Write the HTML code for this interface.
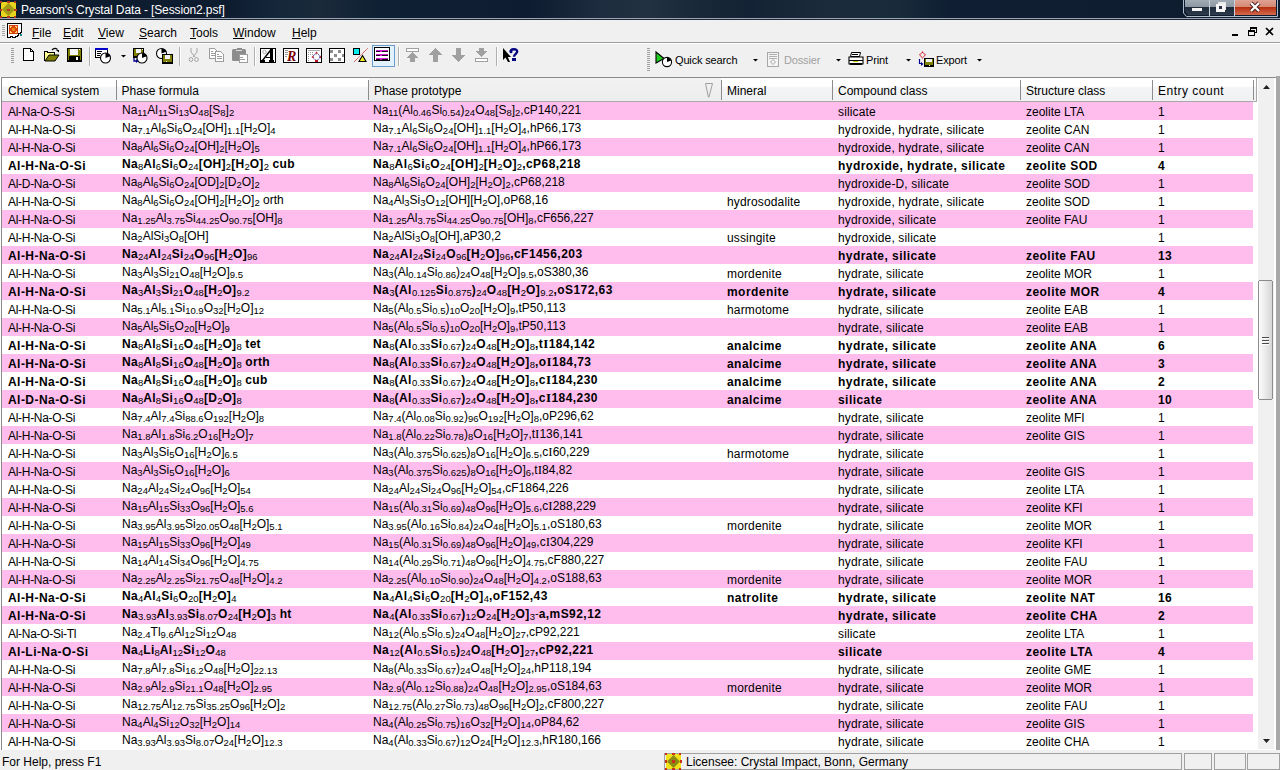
<!DOCTYPE html>
<html><head><meta charset="utf-8">
<style>
*{margin:0;padding:0;box-sizing:border-box}
html,body{width:1280px;height:770px;overflow:hidden;background:#f0f0f0;font-family:"Liberation Sans",sans-serif;font-size:12px;color:#000}
.abs{position:absolute}
#title{position:absolute;left:0;top:0;width:1280px;height:18px;background:linear-gradient(90deg,#0f1d30 0px,#0e1c30 230px,#15263a 275px,#1a2a3b 320px,#102034 380px,#0e1c31 530px,#1d2c3e 600px,#223142 650px,#182839 700px,#132335 750px,#1b2b3c 830px,#192a3b 900px,#0f1e32 950px,#0e1c2f 1280px)}
#title .t{position:absolute;left:21px;top:3px;color:#fff;font-size:12px;line-height:14px;white-space:nowrap;letter-spacing:-0.12px}
#tline1{position:absolute;left:0;top:18px;width:1280px;height:1px;background:#9aa5b1}
#tline2{position:absolute;left:0;top:19px;width:1280px;height:1px;background:#1b2636}
#menu{position:absolute;left:0;top:20px;width:1280px;height:22px;background:#f0f0f0}
#menu .m{position:absolute;top:6px;line-height:14px;font-size:12px;white-space:nowrap}
#menu .m u{text-decoration:underline;text-underline-offset:1px}
#mline{position:absolute;left:0;top:42px;width:1280px;height:1px;background:#a0a0a0}
#tb{position:absolute;left:0;top:43px;width:1280px;height:34px;background:#f0f0f0;border-top:1px solid #fff}
.tbt{position:absolute;top:53px;line-height:14px;font-size:11px;letter-spacing:-0.15px;white-space:nowrap}
#grid{position:absolute;left:0;top:77px;width:1280px;height:673px;background:#fff}
#gborder{position:absolute;left:1px;top:77px;width:1275px;height:673px;border:1px solid #8a8a8a;border-right:none;border-bottom:none}
#hdr{position:absolute;left:2px;top:78px;width:1255px;height:24px;border-right:1px solid #a8a8a8;background:linear-gradient(#ffffff 0%,#ffffff 36%,#f4f5f7 40%,#eff1f3 100%);border-bottom:1px solid #a8a8a8}
#hdr .h{position:absolute;top:4px;line-height:18px;white-space:nowrap}
#hdr .sep{position:absolute;top:2px;width:1px;height:20px;background:#8c8c8c}
.row{position:absolute;left:2px;width:1251px;height:18px;background:#fff}
.row.pink{background:#ffbdee}
.c{position:absolute;top:1px;line-height:18px;white-space:nowrap}
.c.f{top:-1px}
.c.ch{letter-spacing:-0.3px}
.c.lw{letter-spacing:0.15px}
.b .c{font-weight:bold;letter-spacing:0.45px}
.b .c.f1{letter-spacing:0.3px}
sub{font-size:9.5px;vertical-align:-2px;line-height:0;font-weight:normal;letter-spacing:0}
.si{font-family:"Liberation Serif",serif;font-size:13px}
.sup{font-size:11px;vertical-align:1px;line-height:0;font-weight:normal;letter-spacing:0}
#vscroll{position:absolute;left:1258px;top:78px;width:16px;height:671px;background:#f0f0f0}
#rframe{position:absolute;left:1276px;top:76px;width:4px;height:675px;background:#a8a8a8}
#status{position:absolute;left:0;top:750px;width:1280px;height:20px;background:#f0f0f0}
#status .s{position:absolute;top:4px;line-height:16px;white-space:nowrap}
.panel{position:absolute;top:3px;height:17px;border:1px solid #a0a0a0}
</style></head><body>
<div id="title"><div class="t">Pearson's Crystal Data - [Session2.psf]</div></div>
<div id="tline1"></div><div id="tline2"></div>
<div id="menu">
  <div class="m" style="left:32px"><u>F</u>ile</div>
  <div class="m" style="left:63px"><u>E</u>dit</div>
  <div class="m" style="left:98px"><u>V</u>iew</div>
  <div class="m" style="left:139px"><u>S</u>earch</div>
  <div class="m" style="left:190px"><u>T</u>ools</div>
  <div class="m" style="left:233px"><u>W</u>indow</div>
  <div class="m" style="left:292px"><u>H</u>elp</div>
</div>
<div id="mline"></div>
<div id="tb"></div>
<svg class="abs" style="left:0;top:0" width="1280" height="80" viewBox="0 0 1280 80" shape-rendering="crispEdges">
<!-- title icon -->
<rect x="1" y="2" width="15" height="15" fill="#e6d41e"/>
<path d="M8.5 3 L15 9.5 L8.5 16 L2 9.5Z" fill="#a09a18" shape-rendering="geometricPrecision"/>
<g fill="#b8381c"><rect x="0" y="1" width="2" height="2"/><rect x="7" y="1" width="3" height="2"/><rect x="14" y="1" width="2" height="2"/><rect x="0" y="9" width="2" height="2"/><rect x="14" y="9" width="3" height="2"/><rect x="0" y="16" width="2" height="2"/><rect x="7" y="16" width="3" height="2"/><rect x="14" y="16" width="2" height="2"/><rect x="7" y="9" width="3" height="2"/></g>
<!-- window buttons -->
<path d="M1183.5 0 V13 L1186.5 16.5 H1277.5 V0" fill="none" stroke="#aebccb" stroke-width="1" shape-rendering="geometricPrecision"/>
<defs>
<linearGradient id="gbtn" x1="0" y1="0" x2="0" y2="1"><stop offset="0" stop-color="#a0abb5"/><stop offset="0.45" stop-color="#8e98a2"/><stop offset="0.5" stop-color="#1e2b3b"/><stop offset="1" stop-color="#2c3a4c"/></linearGradient>
<linearGradient id="rbtn" x1="0" y1="0" x2="0" y2="1"><stop offset="0" stop-color="#dfa293"/><stop offset="0.45" stop-color="#d58876"/><stop offset="0.5" stop-color="#b9300f"/><stop offset="1" stop-color="#d26a4e"/></linearGradient>
<linearGradient id="thumb" x1="0" y1="0" x2="1" y2="0"><stop offset="0" stop-color="#fbfbfb"/><stop offset="0.5" stop-color="#e9e9e9"/><stop offset="1" stop-color="#d6d6d6"/></linearGradient>
</defs>
<path d="M1185 0 H1209 V15 H1188 L1185 12Z" fill="url(#gbtn)"/>
<rect x="1210" y="0" width="24" height="15" fill="url(#gbtn)"/>
<rect x="1235" y="0" width="41" height="15" fill="url(#rbtn)"/>
<g fill="none" stroke="#c6d0da" stroke-width="1"><path d="M1209.5 0 V15.5 M1234.5 0 V15.5"/></g>
<rect x="1192" y="8" width="10" height="3" fill="#f4f4f4"/>
<rect x="1218" y="2" width="8" height="8" fill="#e8e8e8" stroke="#1a2230" stroke-width="0"/>
<rect x="1216" y="4" width="9" height="8" fill="#f4f4f4"/>
<rect x="1219" y="6" width="3" height="3" fill="#2a3444"/>
<path d="M1251 3 L1259 11 M1259 3 L1251 11" stroke="#4a2020" stroke-width="4" shape-rendering="geometricPrecision"/>
<path d="M1251 3 L1259 11 M1259 3 L1251 11" stroke="#ffffff" stroke-width="2.2" shape-rendering="geometricPrecision"/>
<!-- menu grip & mdi icon -->
<g fill="#a8a8a8"><rect x="2" y="25" width="3" height="1"/><rect x="2" y="27" width="3" height="1"/><rect x="2" y="29" width="3" height="1"/><rect x="2" y="31" width="3" height="1"/><rect x="2" y="33" width="3" height="1"/><rect x="2" y="35" width="3" height="1"/></g>
<path d="M7.5 23.5 H21.5 V32.5 H20.5 V33.5 H18.5 V35.5 H17.5 V36.5 H15.5 V37.5 H12.5 V36.5 H10.5 V37.5 H7.5Z" fill="#fff" stroke="#000" stroke-width="1"/>
<rect x="9" y="25" width="9" height="9" fill="#d8400e"/>
<g fill="#ffd86a"><rect x="10" y="26" width="2" height="1"/><rect x="10" y="26" width="1" height="2"/><rect x="15" y="26" width="2" height="1"/><rect x="16" y="26" width="1" height="2"/><rect x="10" y="32" width="2" height="1"/><rect x="10" y="31" width="1" height="2"/><rect x="15" y="32" width="2" height="1"/><rect x="16" y="31" width="1" height="2"/></g>
<rect x="12" y="28" width="3" height="3" fill="#e88a10"/>
<rect x="20" y="34" width="2" height="2" fill="#1a8a8a"/>
<!-- mdi buttons -->
<rect x="1232" y="34" width="6" height="2" fill="#000"/>
<path d="M1250.5 27.5 H1256.5 V32.5 H1254.5 M1250.5 27.5 V29.5" fill="none" stroke="#000" stroke-width="1"/>
<rect x="1250" y="27" width="7" height="2" fill="#000"/>
<path d="M1248.5 30.5 H1254.5 V35.5 H1248.5Z" fill="none" stroke="#000" stroke-width="1"/>
<rect x="1248" y="30" width="7" height="2" fill="#000"/>
<path d="M1266 28 L1273 35 M1273 28 L1266 35" stroke="#000" stroke-width="1.6" shape-rendering="geometricPrecision"/>
<!-- toolbar 1 grip -->
<g fill="#a0a0a0"><rect x="11" y="48" width="3" height="1"/><rect x="11" y="50" width="3" height="1"/><rect x="11" y="52" width="3" height="1"/><rect x="11" y="54" width="3" height="1"/><rect x="11" y="56" width="3" height="1"/><rect x="11" y="58" width="3" height="1"/><rect x="11" y="60" width="3" height="1"/><rect x="11" y="62" width="3" height="1"/></g>
<!-- new -->
<path d="M23.5 48.5 H30.5 L33.5 51.5 V60.5 H23.5Z" fill="#fff" stroke="#000"/>
<path d="M30.5 48.5 V51.5 H33.5" fill="none" stroke="#000"/>
<!-- open -->
<path d="M44.5 60.5 V51.5 H47.5 V52.5 H54.5 V55.5" fill="#ffff90" stroke="#000"/>
<rect x="45" y="52" width="9" height="8" fill="#ffff90"/>
<path d="M44.5 60.5 V51.5 H47.5 V52.5 H54.5 V55" fill="none" stroke="#000"/>
<path d="M45 61 L49 55 H59 L55 61Z" fill="#808000" stroke="#000" stroke-width="1" shape-rendering="geometricPrecision"/>
<path d="M52 50 Q54.5 47 57.5 49.5" fill="none" stroke="#000" stroke-width="1.2" shape-rendering="geometricPrecision"/>
<path d="M56 50 H59 V52.5Z" fill="#000" shape-rendering="geometricPrecision"/>
<!-- save -->
<rect x="67" y="48" width="15" height="14" fill="#000"/>
<rect x="68" y="49" width="13" height="11" fill="#808000"/>
<rect x="70" y="49" width="8" height="6" fill="#f4f4f4"/>
<rect x="69" y="56" width="11" height="5" fill="#000"/>
<rect x="76" y="57" width="2" height="3" fill="#fff"/>
<rect x="79" y="49" width="1" height="1" fill="#fff"/>
<!-- sep -->
<rect x="89" y="47" width="1" height="19" fill="#b0b0b0"/><rect x="90" y="47" width="1" height="19" fill="#fff"/>
<!-- search form -->
<rect x="95.5" y="48.5" width="12" height="9" fill="#fff" stroke="#000"/>
<rect x="95" y="48" width="13" height="2" fill="#0000c8"/>
<g fill="#000"><rect x="97" y="51" width="5" height="1"/><rect x="97" y="53" width="4" height="1"/><rect x="97" y="55" width="3" height="1"/></g>
<circle cx="105.5" cy="58" r="5" fill="#fff" stroke="#000" stroke-width="1.1" shape-rendering="geometricPrecision"/>
<path d="M105.5 58 V53 A5 5 0 0 1 110.2 56.3Z" fill="#000" shape-rendering="geometricPrecision"/>
<!-- dropdown -->
<path d="M121 55 H126 L123.5 57.5Z" fill="#000" shape-rendering="geometricPrecision"/>
<!-- icon floppy+clock -->
<rect x="133" y="48" width="11" height="10" fill="#000"/>
<rect x="134" y="49" width="9" height="7" fill="#808000"/>
<rect x="136" y="49" width="5" height="4" fill="#f4f4f4"/>
<rect x="142" y="49" width="1" height="1" fill="#fff"/>
<circle cx="142" cy="58" r="5" fill="#fff" stroke="#000" stroke-width="1.1" shape-rendering="geometricPrecision"/>
<path d="M142 58 V53 A5 5 0 0 1 146.7 56.3Z" fill="#000" shape-rendering="geometricPrecision"/>
<path d="M134 58 V61 H137" fill="none" stroke="#00008a" stroke-width="1.3" shape-rendering="geometricPrecision"/>
<path d="M136 59 L138.5 61 L136 63Z" fill="#00008a" shape-rendering="geometricPrecision"/>
<!-- icon clock+floppy -->
<circle cx="161.5" cy="53.5" r="5" fill="#fff" stroke="#000" stroke-width="1.1" shape-rendering="geometricPrecision"/>
<path d="M161.5 53.5 V48.5 A5 5 0 0 1 166.2 51.8Z" fill="#000" shape-rendering="geometricPrecision"/>
<rect x="162" y="54" width="11" height="10" fill="#000"/>
<rect x="163" y="55" width="9" height="7" fill="#808000"/>
<rect x="165" y="55" width="5" height="4" fill="#f4f4f4"/>
<rect x="166" y="61" width="1" height="1" fill="#fff"/>
<!-- sep -->
<rect x="179" y="47" width="1" height="19" fill="#b0b0b0"/><rect x="180" y="47" width="1" height="19" fill="#fff"/>
<!-- cut gray -->
<g fill="none" stroke="#a4a4a4" stroke-width="1" shape-rendering="geometricPrecision">
<path d="M191 48 V52 L195 57 M197 48 V52 L193 57"/>
<ellipse cx="191" cy="59.5" rx="1.8" ry="2"/><ellipse cx="196.5" cy="59.5" rx="1.8" ry="2"/>
</g>
<!-- copy gray -->
<path d="M209.5 48.5 H214.5 L216.5 50.5 V58.5 H209.5Z" fill="#fff" stroke="#9c9c9c"/>
<g fill="#9c9c9c"><rect x="211" y="51" width="2" height="1"/><rect x="211" y="53" width="4" height="1"/><rect x="211" y="55" width="4" height="1"/></g>
<path d="M215.5 51.5 H220.5 L223.5 54.5 V61.5 H215.5Z" fill="#fff" stroke="#9c9c9c"/>
<g fill="#9c9c9c"><rect x="217" y="54" width="2" height="1"/><rect x="217" y="56" width="5" height="1"/><rect x="217" y="58" width="5" height="1"/></g>
<!-- paste gray -->
<rect x="232" y="49" width="14" height="12" rx="1.5" fill="#8c8c8c" shape-rendering="geometricPrecision"/>
<rect x="237" y="48" width="5" height="2" fill="#8c8c8c"/>
<rect x="236" y="50" width="6" height="1" fill="#e0e0e0"/>
<rect x="239" y="54" width="8" height="8" fill="#fff" stroke="#9c9c9c" stroke-width="1"/>
<g fill="#9c9c9c"><rect x="240" y="57" width="3" height="1"/><rect x="240" y="59" width="5" height="1"/></g>
<!-- sep -->
<rect x="254" y="47" width="1" height="19" fill="#b0b0b0"/><rect x="255" y="47" width="1" height="19" fill="#fff"/>
<!-- A icon -->
<rect x="260.5" y="48.5" width="15" height="14" fill="#fff" stroke="#000" stroke-width="1"/>
<circle cx="264.5" cy="52" r="1.7" fill="none" stroke="#a8a8a8" stroke-width="1" shape-rendering="geometricPrecision"/>
<path d="M262.5 60.5 L271.5 49" stroke="#000" stroke-width="1.5" shape-rendering="geometricPrecision"/>
<g fill="#000"><rect x="270" y="49" width="3" height="11"/><rect x="266" y="57" width="5" height="1"/><rect x="261" y="60" width="4" height="2"/><rect x="269" y="60" width="5" height="2"/></g>
<!-- R icon -->
<rect x="283.5" y="48.5" width="15" height="14" fill="#fff" stroke="#000" stroke-width="1"/>
<g fill="#9a9a9a"><rect x="285" y="50" width="3" height="1"/><rect x="285" y="52" width="3" height="1"/><rect x="285" y="54" width="3" height="1"/><rect x="285" y="56" width="2" height="1"/></g>
<text x="287" y="61" font-family="Liberation Serif" font-style="italic" font-weight="bold" font-size="14" fill="#7a0000">R</text>
<!-- diagram icon -->
<rect x="306.5" y="48.5" width="15" height="14" fill="#fff" stroke="#000" stroke-width="1"/>
<rect x="308" y="50" width="12" height="1" fill="#b0b0b0"/>
<g fill="#9a9a9a"><rect x="308" y="52" width="1" height="1"/><rect x="310" y="52" width="1" height="1"/><rect x="312" y="52" width="1" height="1"/><rect x="308" y="54" width="1" height="1"/><rect x="310" y="54" width="1" height="1"/><rect x="312" y="54" width="1" height="1"/><rect x="308" y="56" width="1" height="1"/><rect x="308" y="58" width="1" height="1"/><rect x="308" y="60" width="1" height="1"/></g>
<circle cx="316.5" cy="57" r="3.2" fill="#fff" stroke="#1010a0" stroke-width="1" stroke-dasharray="1 0.8" shape-rendering="geometricPrecision"/>
<g fill="#c01020" shape-rendering="geometricPrecision"><path d="M316.5 51.5 L318 53.5 H315Z"/><path d="M311.5 57 L313.5 55.5 V58.5Z"/><path d="M321 55.5 V58.5 L319.5 57Z"/><rect x="315" y="60" width="3" height="2"/></g>
<!-- checker icon -->
<rect x="329.5" y="48.5" width="15" height="14" fill="#fff" stroke="#000" stroke-width="1"/>
<g fill="#8c8c8c"><rect x="330" y="50" width="3" height="3"/><rect x="338" y="50" width="3" height="3"/><rect x="334" y="54" width="3" height="3"/><rect x="342" y="54" width="2" height="3"/><rect x="330" y="58" width="3" height="3"/><rect x="338" y="58" width="3" height="3"/></g>
<!-- cyan/triangle -->
<rect x="353.5" y="48.5" width="6" height="6" fill="#00f0f0" stroke="#000" stroke-width="1"/>
<path d="M354 62 L368 48" stroke="#d02020" stroke-width="1" stroke-dasharray="1 0.6" shape-rendering="geometricPrecision"/>
<path d="M362.5 55.5 L366 61.5 H359Z" fill="#f8f020" stroke="#000" stroke-width="1.1" shape-rendering="geometricPrecision"/>
<!-- selected button -->
<rect x="372.5" y="45.5" width="22" height="21" fill="#e2f2fc" stroke="#6c9ccc"/>
<rect x="374.5" y="47.5" width="15" height="13" fill="#fff" stroke="#000" stroke-width="1"/>
<g fill="#d020d0"><rect x="376" y="50" width="12" height="2"/><rect x="376" y="54" width="12" height="2"/><rect x="376" y="58" width="12" height="2"/></g>
<g fill="#200020"><rect x="376" y="50.5" width="4" height="1.2"/><rect x="382" y="50.5" width="6" height="1.2"/><rect x="376" y="54.5" width="4" height="1.2"/><rect x="382" y="54.5" width="6" height="1.2"/><rect x="376" y="58.5" width="4" height="1.2"/><rect x="382" y="58.5" width="6" height="1.2"/></g>
<!-- sep -->
<rect x="398" y="47" width="1" height="19" fill="#b0b0b0"/><rect x="399" y="47" width="1" height="19" fill="#fff"/>
<!-- arrows gray -->
<g fill="#a0a0a0">
<rect x="406.5" y="48.5" width="12" height="3" fill="#fff" stroke="#a0a0a0" stroke-width="1.2"/>
<path d="M412.5 52 L419 58 H415 V62 H410 V58 H406Z"/>
<path d="M435.5 48 L442 55 H438 V62 H433 V55 H429Z"/>
<path d="M456 48 H461 V55 H465 L458.5 62 L452 55 H456Z"/>
<path d="M479 48 H484 V51 H488 L481.5 57 L475 51 H479Z"/>
<rect x="475.5" y="58.5" width="12" height="3" fill="#fff" stroke="#a0a0a0" stroke-width="1.2"/>
</g>
<!-- sep -->
<rect x="496" y="47" width="1" height="19" fill="#b0b0b0"/><rect x="497" y="47" width="1" height="19" fill="#fff"/>
<!-- help cursor -->
<path d="M503 48 V60 L505.5 57.5 L508 62 H510 L507.8 57 H511Z" fill="#000" shape-rendering="geometricPrecision"/>
<path d="M510.6 51.8 C510.6 48.6, 517.2 48.4, 517.2 51.6 C517.2 53.8, 514 54, 514 56.8" fill="none" stroke="#000080" stroke-width="2.4" shape-rendering="geometricPrecision"/><circle cx="511" cy="51.8" r="1.5" fill="#000080" shape-rendering="geometricPrecision"/><rect x="512" y="58" width="4" height="2.5" fill="#000080"/>
<!-- toolbar 2 grip -->
<g fill="#a0a0a0"><rect x="647" y="48" width="3" height="1"/><rect x="647" y="50" width="3" height="1"/><rect x="647" y="52" width="3" height="1"/><rect x="647" y="54" width="3" height="1"/><rect x="647" y="56" width="3" height="1"/><rect x="647" y="58" width="3" height="1"/><rect x="647" y="60" width="3" height="1"/><rect x="647" y="62" width="3" height="1"/><rect x="647" y="64" width="3" height="1"/><rect x="647" y="66" width="3" height="1"/><rect x="647" y="68" width="3" height="1"/><rect x="647" y="70" width="3" height="1"/></g>
<!-- quick search icon -->
<path d="M656 52 L664 58.5 L656 63Z" fill="#20d020" stroke="#000" stroke-width="1.1" shape-rendering="geometricPrecision"/>
<circle cx="667" cy="62" r="4.6" fill="#fff" stroke="#000" stroke-width="1.1" shape-rendering="geometricPrecision"/>
<path d="M667 62 V57.4 A4.6 4.6 0 0 1 671.3 60.4Z" fill="#000" shape-rendering="geometricPrecision"/>
<path d="M753 59 H758 L755.5 61.5Z" fill="#000" shape-rendering="geometricPrecision"/>
<!-- dossier icon gray -->
<rect x="767.5" y="52.5" width="11" height="14" fill="#f4f4f4" stroke="#a8a8a8"/>
<g fill="#b0b0b0"><rect x="769" y="54" width="8" height="1"/><rect x="769" y="56" width="8" height="1"/><rect x="769" y="58" width="8" height="1"/></g>
<path d="M773 59.5 L775.5 62 L773 64.5 L770.5 62Z" fill="none" stroke="#a8a8a8" shape-rendering="geometricPrecision"/>
<path d="M836 59 H841 L838.5 61.5Z" fill="#000" shape-rendering="geometricPrecision"/>
<!-- print icon -->
<path d="M851.5 52.5 H860.5 L859.5 56.5 H850.5Z" fill="#fff" stroke="#000" shape-rendering="geometricPrecision"/>
<rect x="852" y="54" width="6" height="1" fill="#000"/>
<path d="M849 57 H863 V64 H849Z" fill="#fff" stroke="#000" stroke-width="1.1" shape-rendering="geometricPrecision"/>
<rect x="849" y="60" width="14" height="1" fill="#000"/>
<rect x="853" y="61" width="5" height="1" fill="#c8c800"/>
<rect x="850" y="63" width="12" height="2" fill="#000"/>
<path d="M906 59 H911 L908.5 61.5Z" fill="#000" shape-rendering="geometricPrecision"/>
<!-- export icon -->
<path d="M922.5 52 L925.5 55 L922.5 58 L919.5 55Z" fill="none" stroke="#d01020" stroke-width="1.1" stroke-dasharray="1 0.6" shape-rendering="geometricPrecision"/>
<rect x="924" y="58" width="10" height="9" fill="#000"/>
<rect x="925" y="59" width="8" height="6" fill="#808000"/>
<rect x="926" y="59" width="6" height="3" fill="#f4f4f4"/>
<rect x="929" y="65" width="1" height="1" fill="#fff"/>
<path d="M919.5 59 V63.5 H922" fill="none" stroke="#000090" stroke-width="1.2" shape-rendering="geometricPrecision"/>
<path d="M921 62 L923.5 64 L921 66Z" fill="#000090" shape-rendering="geometricPrecision"/>
<path d="M977 59 H982 L979.5 61.5Z" fill="#000" shape-rendering="geometricPrecision"/>
</svg>

<div class="tbt" style="left:675px">Quick search</div>
<div class="tbt" style="left:784px;color:#a0a0a0">Dossier</div>
<div class="tbt" style="left:866px">Print</div>
<div class="tbt" style="left:936px">Export</div>
<div id="grid"></div>
<div id="gborder"></div>
<div id="hdr">
  <div style="position:absolute;left:367px;top:0;width:352px;height:23px;background:linear-gradient(#f2f2f2,#ededed)"></div>
  <svg style="position:absolute;left:700px;top:2px" width="16" height="20" viewBox="0 0 16 20"><path d="M3.5 3.5 H10.5 M3.5 3.5 L6.5 17.5 M10.5 3.5 L7 17" fill="none" stroke="#a0a0a0" stroke-width="1"/></svg>
  <div class="h" style="left:6px">Chemical system</div>
  <div class="sep" style="left:114px"></div>
  <div class="h" style="left:119.5px">Phase formula</div>
  <div class="sep" style="left:366px"></div>
  <div class="h" style="left:372px">Phase prototype</div>
  <div class="sep" style="left:719px"></div>
  <div class="h" style="left:725px">Mineral</div>
  <div class="sep" style="left:830px"></div>
  <div class="h" style="left:836px">Compound class</div>
  <div class="sep" style="left:1018px"></div>
  <div class="h" style="left:1024px">Structure class</div>
  <div class="sep" style="left:1150px"></div>
  <div class="h" style="left:1156px;letter-spacing:0.5px">Entry count</div>
  <div class="sep" style="left:1251px"></div>
</div>
<div class="row pink" style="top:102px"><div class="c ch" style="left:6px">Al-Na-O-S-Si</div><div class="c f f1" style="left:120px">Na<sub>11</sub>Al<sub>11</sub>Si<sub>13</sub>O<sub>48</sub>[S<sub>8</sub>]<sub>2</sub></div><div class="c f" style="left:371px">Na<sub>11</sub>(Al<sub>0.46</sub>Si<sub>0.54</sub>)<sub>24</sub>O<sub>48</sub>[S<sub>8</sub>]<sub>2</sub>,cP140,221</div><div class="c lw" style="left:725px"></div><div class="c lw" style="left:836px">silicate</div><div class="c " style="left:1024px">zeolite LTA</div><div class="c " style="left:1156px">1</div></div>
<div class="row" style="top:120px"><div class="c ch" style="left:6px">Al-H-Na-O-Si</div><div class="c f f1" style="left:120px">Na<sub>7.1</sub>Al<sub>6</sub>Si<sub>6</sub>O<sub>24</sub>[OH]<sub>1.1</sub>[H<sub>2</sub>O]<sub>4</sub></div><div class="c f" style="left:371px">Na<sub>7.1</sub>Al<sub>6</sub>Si<sub>6</sub>O<sub>24</sub>[OH]<sub>1.1</sub>[H<sub>2</sub>O]<sub>4</sub>,hP66,173</div><div class="c lw" style="left:725px"></div><div class="c lw" style="left:836px">hydroxide, hydrate, silicate</div><div class="c " style="left:1024px">zeolite CAN</div><div class="c " style="left:1156px">1</div></div>
<div class="row pink" style="top:138px"><div class="c ch" style="left:6px">Al-H-Na-O-Si</div><div class="c f f1" style="left:120px">Na<sub>8</sub>Al<sub>6</sub>Si<sub>6</sub>O<sub>24</sub>[OH]<sub>2</sub>[H<sub>2</sub>O]<sub>5</sub></div><div class="c f" style="left:371px">Na<sub>7.1</sub>Al<sub>6</sub>Si<sub>6</sub>O<sub>24</sub>[OH]<sub>1.1</sub>[H<sub>2</sub>O]<sub>4</sub>,hP66,173</div><div class="c lw" style="left:725px"></div><div class="c lw" style="left:836px">hydroxide, hydrate, silicate</div><div class="c " style="left:1024px">zeolite CAN</div><div class="c " style="left:1156px">1</div></div>
<div class="row b" style="top:156px"><div class="c ch" style="left:6px">Al-H-Na-O-Si</div><div class="c f f1" style="left:120px">Na<sub>8</sub>Al<sub>6</sub>Si<sub>6</sub>O<sub>24</sub>[OH]<sub>2</sub>[H<sub>2</sub>O]<sub>2</sub> cub</div><div class="c f" style="left:371px">Na<sub>8</sub>Al<sub>6</sub>Si<sub>6</sub>O<sub>24</sub>[OH]<sub>2</sub>[H<sub>2</sub>O]<sub>2</sub>,cP68,218</div><div class="c lw" style="left:725px"></div><div class="c lw" style="left:836px">hydroxide, hydrate, silicate</div><div class="c " style="left:1024px">zeolite SOD</div><div class="c " style="left:1156px">4</div></div>
<div class="row pink" style="top:174px"><div class="c ch" style="left:6px">Al-D-Na-O-Si</div><div class="c f f1" style="left:120px">Na<sub>8</sub>Al<sub>6</sub>Si<sub>6</sub>O<sub>24</sub>[OD]<sub>2</sub>[D<sub>2</sub>O]<sub>2</sub></div><div class="c f" style="left:371px">Na<sub>8</sub>Al<sub>6</sub>Si<sub>6</sub>O<sub>24</sub>[OH]<sub>2</sub>[H<sub>2</sub>O]<sub>2</sub>,cP68,218</div><div class="c lw" style="left:725px"></div><div class="c lw" style="left:836px">hydroxide-D, silicate</div><div class="c " style="left:1024px">zeolite SOD</div><div class="c " style="left:1156px">1</div></div>
<div class="row" style="top:192px"><div class="c ch" style="left:6px">Al-H-Na-O-Si</div><div class="c f f1" style="left:120px">Na<sub>8</sub>Al<sub>6</sub>Si<sub>6</sub>O<sub>24</sub>[OH]<sub>2</sub>[H<sub>2</sub>O]<sub>2</sub> orth</div><div class="c f" style="left:371px">Na<sub>4</sub>Al<sub>3</sub>Si<sub>3</sub>O<sub>12</sub>[OH][H<sub>2</sub>O],oP68,16</div><div class="c lw" style="left:725px">hydrosodalite</div><div class="c lw" style="left:836px">hydroxide, hydrate, silicate</div><div class="c " style="left:1024px">zeolite SOD</div><div class="c " style="left:1156px">1</div></div>
<div class="row pink" style="top:210px"><div class="c ch" style="left:6px">Al-H-Na-O-Si</div><div class="c f f1" style="left:120px">Na<sub>1.25</sub>Al<sub>3.75</sub>Si<sub>44.25</sub>O<sub>90.75</sub>[OH]<sub>8</sub></div><div class="c f" style="left:371px">Na<sub>1.25</sub>Al<sub>3.75</sub>Si<sub>44.25</sub>O<sub>90.75</sub>[OH]<sub>8</sub>,cF656,227</div><div class="c lw" style="left:725px"></div><div class="c lw" style="left:836px">hydroxide, silicate</div><div class="c " style="left:1024px">zeolite FAU</div><div class="c " style="left:1156px">1</div></div>
<div class="row" style="top:228px"><div class="c ch" style="left:6px">Al-H-Na-O-Si</div><div class="c f f1" style="left:120px">Na<sub>2</sub>AlSi<sub>3</sub>O<sub>8</sub>[OH]</div><div class="c f" style="left:371px">Na<sub>2</sub>AlSi<sub>3</sub>O<sub>8</sub>[OH],aP30,2</div><div class="c lw" style="left:725px">ussingite</div><div class="c lw" style="left:836px">hydroxide, silicate</div><div class="c " style="left:1024px"></div><div class="c " style="left:1156px">1</div></div>
<div class="row pink b" style="top:246px"><div class="c ch" style="left:6px">Al-H-Na-O-Si</div><div class="c f f1" style="left:120px">Na<sub>24</sub>Al<sub>24</sub>Si<sub>24</sub>O<sub>96</sub>[H<sub>2</sub>O]<sub>96</sub></div><div class="c f" style="left:371px">Na<sub>24</sub>Al<sub>24</sub>Si<sub>24</sub>O<sub>96</sub>[H<sub>2</sub>O]<sub>96</sub>,cF1456,203</div><div class="c lw" style="left:725px"></div><div class="c lw" style="left:836px">hydrate, silicate</div><div class="c " style="left:1024px">zeolite FAU</div><div class="c " style="left:1156px">13</div></div>
<div class="row" style="top:264px"><div class="c ch" style="left:6px">Al-H-Na-O-Si</div><div class="c f f1" style="left:120px">Na<sub>3</sub>Al<sub>3</sub>Si<sub>21</sub>O<sub>48</sub>[H<sub>2</sub>O]<sub>9.5</sub></div><div class="c f" style="left:371px">Na<sub>3</sub>(Al<sub>0.14</sub>Si<sub>0.86</sub>)<sub>24</sub>O<sub>48</sub>[H<sub>2</sub>O]<sub>9.5</sub>,oS380,36</div><div class="c lw" style="left:725px">mordenite</div><div class="c lw" style="left:836px">hydrate, silicate</div><div class="c " style="left:1024px">zeolite MOR</div><div class="c " style="left:1156px">1</div></div>
<div class="row pink b" style="top:282px"><div class="c ch" style="left:6px">Al-H-Na-O-Si</div><div class="c f f1" style="left:120px">Na<sub>3</sub>Al<sub>3</sub>Si<sub>21</sub>O<sub>48</sub>[H<sub>2</sub>O]<sub>9.2</sub></div><div class="c f" style="left:371px">Na<sub>3</sub>(Al<sub>0.125</sub>Si<sub>0.875</sub>)<sub>24</sub>O<sub>48</sub>[H<sub>2</sub>O]<sub>9.2</sub>,oS172,63</div><div class="c lw" style="left:725px">mordenite</div><div class="c lw" style="left:836px">hydrate, silicate</div><div class="c " style="left:1024px">zeolite MOR</div><div class="c " style="left:1156px">4</div></div>
<div class="row" style="top:300px"><div class="c ch" style="left:6px">Al-H-Na-O-Si</div><div class="c f f1" style="left:120px">Na<sub>5.1</sub>Al<sub>5.1</sub>Si<sub>10.9</sub>O<sub>32</sub>[H<sub>2</sub>O]<sub>12</sub></div><div class="c f" style="left:371px">Na<sub>5</sub>(Al<sub>0.5</sub>Si<sub>0.5</sub>)<sub>10</sub>O<sub>20</sub>[H<sub>2</sub>O]<sub>9</sub>,tP50,113</div><div class="c lw" style="left:725px">harmotome</div><div class="c lw" style="left:836px">hydrate, silicate</div><div class="c " style="left:1024px">zeolite EAB</div><div class="c " style="left:1156px">1</div></div>
<div class="row pink" style="top:318px"><div class="c ch" style="left:6px">Al-H-Na-O-Si</div><div class="c f f1" style="left:120px">Na<sub>5</sub>Al<sub>5</sub>Si<sub>5</sub>O<sub>20</sub>[H<sub>2</sub>O]<sub>9</sub></div><div class="c f" style="left:371px">Na<sub>5</sub>(Al<sub>0.5</sub>Si<sub>0.5</sub>)<sub>10</sub>O<sub>20</sub>[H<sub>2</sub>O]<sub>9</sub>,tP50,113</div><div class="c lw" style="left:725px"></div><div class="c lw" style="left:836px">hydrate, silicate</div><div class="c " style="left:1024px">zeolite EAB</div><div class="c " style="left:1156px">1</div></div>
<div class="row b" style="top:336px"><div class="c ch" style="left:6px">Al-H-Na-O-Si</div><div class="c f f1" style="left:120px">Na<sub>8</sub>Al<sub>8</sub>Si<sub>16</sub>O<sub>48</sub>[H<sub>2</sub>O]<sub>8</sub> tet</div><div class="c f" style="left:371px">Na<sub>8</sub>(Al<sub>0.33</sub>Si<sub>0.67</sub>)<sub>24</sub>O<sub>48</sub>[H<sub>2</sub>O]<sub>8</sub>,t<span class="si">I</span>184,142</div><div class="c lw" style="left:725px">analcime</div><div class="c lw" style="left:836px">hydrate, silicate</div><div class="c " style="left:1024px">zeolite ANA</div><div class="c " style="left:1156px">6</div></div>
<div class="row pink b" style="top:354px"><div class="c ch" style="left:6px">Al-H-Na-O-Si</div><div class="c f f1" style="left:120px">Na<sub>8</sub>Al<sub>8</sub>Si<sub>16</sub>O<sub>48</sub>[H<sub>2</sub>O]<sub>8</sub> orth</div><div class="c f" style="left:371px">Na<sub>8</sub>(Al<sub>0.33</sub>Si<sub>0.67</sub>)<sub>24</sub>O<sub>48</sub>[H<sub>2</sub>O]<sub>8</sub>,o<span class="si">I</span>184,73</div><div class="c lw" style="left:725px">analcime</div><div class="c lw" style="left:836px">hydrate, silicate</div><div class="c " style="left:1024px">zeolite ANA</div><div class="c " style="left:1156px">3</div></div>
<div class="row b" style="top:372px"><div class="c ch" style="left:6px">Al-H-Na-O-Si</div><div class="c f f1" style="left:120px">Na<sub>8</sub>Al<sub>8</sub>Si<sub>16</sub>O<sub>48</sub>[H<sub>2</sub>O]<sub>8</sub> cub</div><div class="c f" style="left:371px">Na<sub>8</sub>(Al<sub>0.33</sub>Si<sub>0.67</sub>)<sub>24</sub>O<sub>48</sub>[H<sub>2</sub>O]<sub>8</sub>,c<span class="si">I</span>184,230</div><div class="c lw" style="left:725px">analcime</div><div class="c lw" style="left:836px">hydrate, silicate</div><div class="c " style="left:1024px">zeolite ANA</div><div class="c " style="left:1156px">2</div></div>
<div class="row pink b" style="top:390px"><div class="c ch" style="left:6px">Al-D-Na-O-Si</div><div class="c f f1" style="left:120px">Na<sub>8</sub>Al<sub>8</sub>Si<sub>16</sub>O<sub>48</sub>[D<sub>2</sub>O]<sub>8</sub></div><div class="c f" style="left:371px">Na<sub>8</sub>(Al<sub>0.33</sub>Si<sub>0.67</sub>)<sub>24</sub>O<sub>48</sub>[H<sub>2</sub>O]<sub>8</sub>,c<span class="si">I</span>184,230</div><div class="c lw" style="left:725px">analcime</div><div class="c lw" style="left:836px">silicate</div><div class="c " style="left:1024px">zeolite ANA</div><div class="c " style="left:1156px">10</div></div>
<div class="row" style="top:408px"><div class="c ch" style="left:6px">Al-H-Na-O-Si</div><div class="c f f1" style="left:120px">Na<sub>7.4</sub>Al<sub>7.4</sub>Si<sub>88.6</sub>O<sub>192</sub>[H<sub>2</sub>O]<sub>8</sub></div><div class="c f" style="left:371px">Na<sub>7.4</sub>(Al<sub>0.08</sub>Si<sub>0.92</sub>)<sub>96</sub>O<sub>192</sub>[H<sub>2</sub>O]<sub>8</sub>,oP296,62</div><div class="c lw" style="left:725px"></div><div class="c lw" style="left:836px">hydrate, silicate</div><div class="c " style="left:1024px">zeolite MFI</div><div class="c " style="left:1156px">1</div></div>
<div class="row pink" style="top:426px"><div class="c ch" style="left:6px">Al-H-Na-O-Si</div><div class="c f f1" style="left:120px">Na<sub>1.8</sub>Al<sub>1.8</sub>Si<sub>6.2</sub>O<sub>16</sub>[H<sub>2</sub>O]<sub>7</sub></div><div class="c f" style="left:371px">Na<sub>1.8</sub>(Al<sub>0.22</sub>Si<sub>0.78</sub>)<sub>8</sub>O<sub>16</sub>[H<sub>2</sub>O]<sub>7</sub>,t<span class="si">I</span>136,141</div><div class="c lw" style="left:725px"></div><div class="c lw" style="left:836px">hydrate, silicate</div><div class="c " style="left:1024px">zeolite GIS</div><div class="c " style="left:1156px">1</div></div>
<div class="row" style="top:444px"><div class="c ch" style="left:6px">Al-H-Na-O-Si</div><div class="c f f1" style="left:120px">Na<sub>3</sub>Al<sub>3</sub>Si<sub>5</sub>O<sub>16</sub>[H<sub>2</sub>O]<sub>6.5</sub></div><div class="c f" style="left:371px">Na<sub>3</sub>(Al<sub>0.375</sub>Si<sub>0.625</sub>)<sub>8</sub>O<sub>16</sub>[H<sub>2</sub>O]<sub>6.5</sub>,c<span class="si">I</span>60,229</div><div class="c lw" style="left:725px">harmotome</div><div class="c lw" style="left:836px">hydrate, silicate</div><div class="c " style="left:1024px"></div><div class="c " style="left:1156px">1</div></div>
<div class="row pink" style="top:462px"><div class="c ch" style="left:6px">Al-H-Na-O-Si</div><div class="c f f1" style="left:120px">Na<sub>3</sub>Al<sub>3</sub>Si<sub>5</sub>O<sub>16</sub>[H<sub>2</sub>O]<sub>6</sub></div><div class="c f" style="left:371px">Na<sub>3</sub>(Al<sub>0.375</sub>Si<sub>0.625</sub>)<sub>8</sub>O<sub>16</sub>[H<sub>2</sub>O]<sub>6</sub>,t<span class="si">I</span>84,82</div><div class="c lw" style="left:725px"></div><div class="c lw" style="left:836px">hydrate, silicate</div><div class="c " style="left:1024px">zeolite GIS</div><div class="c " style="left:1156px">1</div></div>
<div class="row" style="top:480px"><div class="c ch" style="left:6px">Al-H-Na-O-Si</div><div class="c f f1" style="left:120px">Na<sub>24</sub>Al<sub>24</sub>Si<sub>24</sub>O<sub>96</sub>[H<sub>2</sub>O]<sub>54</sub></div><div class="c f" style="left:371px">Na<sub>24</sub>Al<sub>24</sub>Si<sub>24</sub>O<sub>96</sub>[H<sub>2</sub>O]<sub>54</sub>,cF1864,226</div><div class="c lw" style="left:725px"></div><div class="c lw" style="left:836px">hydrate, silicate</div><div class="c " style="left:1024px">zeolite LTA</div><div class="c " style="left:1156px">1</div></div>
<div class="row pink" style="top:498px"><div class="c ch" style="left:6px">Al-H-Na-O-Si</div><div class="c f f1" style="left:120px">Na<sub>15</sub>Al<sub>15</sub>Si<sub>33</sub>O<sub>96</sub>[H<sub>2</sub>O]<sub>5.6</sub></div><div class="c f" style="left:371px">Na<sub>15</sub>(Al<sub>0.31</sub>Si<sub>0.69</sub>)<sub>48</sub>O<sub>96</sub>[H<sub>2</sub>O]<sub>5.6</sub>,c<span class="si">I</span>288,229</div><div class="c lw" style="left:725px"></div><div class="c lw" style="left:836px">hydrate, silicate</div><div class="c " style="left:1024px">zeolite KFI</div><div class="c " style="left:1156px">1</div></div>
<div class="row" style="top:516px"><div class="c ch" style="left:6px">Al-H-Na-O-Si</div><div class="c f f1" style="left:120px">Na<sub>3.95</sub>Al<sub>3.95</sub>Si<sub>20.05</sub>O<sub>48</sub>[H<sub>2</sub>O]<sub>5.1</sub></div><div class="c f" style="left:371px">Na<sub>3.95</sub>(Al<sub>0.16</sub>Si<sub>0.84</sub>)<sub>24</sub>O<sub>48</sub>[H<sub>2</sub>O]<sub>5.1</sub>,oS180,63</div><div class="c lw" style="left:725px">mordenite</div><div class="c lw" style="left:836px">hydrate, silicate</div><div class="c " style="left:1024px">zeolite MOR</div><div class="c " style="left:1156px">1</div></div>
<div class="row pink" style="top:534px"><div class="c ch" style="left:6px">Al-H-Na-O-Si</div><div class="c f f1" style="left:120px">Na<sub>15</sub>Al<sub>15</sub>Si<sub>33</sub>O<sub>96</sub>[H<sub>2</sub>O]<sub>49</sub></div><div class="c f" style="left:371px">Na<sub>15</sub>(Al<sub>0.31</sub>Si<sub>0.69</sub>)<sub>48</sub>O<sub>96</sub>[H<sub>2</sub>O]<sub>49</sub>,c<span class="si">I</span>304,229</div><div class="c lw" style="left:725px"></div><div class="c lw" style="left:836px">hydrate, silicate</div><div class="c " style="left:1024px">zeolite KFI</div><div class="c " style="left:1156px">1</div></div>
<div class="row" style="top:552px"><div class="c ch" style="left:6px">Al-H-Na-O-Si</div><div class="c f f1" style="left:120px">Na<sub>14</sub>Al<sub>14</sub>Si<sub>34</sub>O<sub>96</sub>[H<sub>2</sub>O]<sub>4.75</sub></div><div class="c f" style="left:371px">Na<sub>14</sub>(Al<sub>0.29</sub>Si<sub>0.71</sub>)<sub>48</sub>O<sub>96</sub>[H<sub>2</sub>O]<sub>4.75</sub>,cF880,227</div><div class="c lw" style="left:725px"></div><div class="c lw" style="left:836px">hydrate, silicate</div><div class="c " style="left:1024px">zeolite FAU</div><div class="c " style="left:1156px">1</div></div>
<div class="row pink" style="top:570px"><div class="c ch" style="left:6px">Al-H-Na-O-Si</div><div class="c f f1" style="left:120px">Na<sub>2.25</sub>Al<sub>2.25</sub>Si<sub>21.75</sub>O<sub>48</sub>[H<sub>2</sub>O]<sub>4.2</sub></div><div class="c f" style="left:371px">Na<sub>2.25</sub>(Al<sub>0.10</sub>Si<sub>0.90</sub>)<sub>24</sub>O<sub>48</sub>[H<sub>2</sub>O]<sub>4.2</sub>,oS188,63</div><div class="c lw" style="left:725px">mordenite</div><div class="c lw" style="left:836px">hydrate, silicate</div><div class="c " style="left:1024px">zeolite MOR</div><div class="c " style="left:1156px">1</div></div>
<div class="row b" style="top:588px"><div class="c ch" style="left:6px">Al-H-Na-O-Si</div><div class="c f f1" style="left:120px">Na<sub>4</sub>Al<sub>4</sub>Si<sub>6</sub>O<sub>20</sub>[H<sub>2</sub>O]<sub>4</sub></div><div class="c f" style="left:371px">Na<sub>4</sub>Al<sub>4</sub>Si<sub>6</sub>O<sub>20</sub>[H<sub>2</sub>O]<sub>4</sub>,oF152,43</div><div class="c lw" style="left:725px">natrolite</div><div class="c lw" style="left:836px">hydrate, silicate</div><div class="c " style="left:1024px">zeolite NAT</div><div class="c " style="left:1156px">16</div></div>
<div class="row pink b" style="top:606px"><div class="c ch" style="left:6px">Al-H-Na-O-Si</div><div class="c f f1" style="left:120px">Na<sub>3.93</sub>Al<sub>3.93</sub>Si<sub>8.07</sub>O<sub>24</sub>[H<sub>2</sub>O]<sub>3</sub> ht</div><div class="c f" style="left:371px">Na<sub>4</sub>(Al<sub>0.33</sub>Si<sub>0.67</sub>)<sub>12</sub>O<sub>24</sub>[H<sub>2</sub>O]<sub>3</sub><span class="sup">-</span>a,mS92,12</div><div class="c lw" style="left:725px"></div><div class="c lw" style="left:836px">hydrate, silicate</div><div class="c " style="left:1024px">zeolite CHA</div><div class="c " style="left:1156px">2</div></div>
<div class="row" style="top:624px"><div class="c ch" style="left:6px">Al-Na-O-Si-Tl</div><div class="c f f1" style="left:120px">Na<sub>2.4</sub>Tl<sub>9.6</sub>Al<sub>12</sub>Si<sub>12</sub>O<sub>48</sub></div><div class="c f" style="left:371px">Na<sub>12</sub>(Al<sub>0.5</sub>Si<sub>0.5</sub>)<sub>24</sub>O<sub>48</sub>[H<sub>2</sub>O]<sub>27</sub>,cP92,221</div><div class="c lw" style="left:725px"></div><div class="c lw" style="left:836px">silicate</div><div class="c " style="left:1024px">zeolite LTA</div><div class="c " style="left:1156px">1</div></div>
<div class="row pink b" style="top:642px"><div class="c ch" style="left:6px">Al-Li-Na-O-Si</div><div class="c f f1" style="left:120px">Na<sub>4</sub>Li<sub>8</sub>Al<sub>12</sub>Si<sub>12</sub>O<sub>48</sub></div><div class="c f" style="left:371px">Na<sub>12</sub>(Al<sub>0.5</sub>Si<sub>0.5</sub>)<sub>24</sub>O<sub>48</sub>[H<sub>2</sub>O]<sub>27</sub>,cP92,221</div><div class="c lw" style="left:725px"></div><div class="c lw" style="left:836px">silicate</div><div class="c " style="left:1024px">zeolite LTA</div><div class="c " style="left:1156px">4</div></div>
<div class="row" style="top:660px"><div class="c ch" style="left:6px">Al-H-Na-O-Si</div><div class="c f f1" style="left:120px">Na<sub>7.8</sub>Al<sub>7.8</sub>Si<sub>16.2</sub>O<sub>48</sub>[H<sub>2</sub>O]<sub>22.13</sub></div><div class="c f" style="left:371px">Na<sub>8</sub>(Al<sub>0.33</sub>Si<sub>0.67</sub>)<sub>24</sub>O<sub>48</sub>[H<sub>2</sub>O]<sub>24</sub>,hP118,194</div><div class="c lw" style="left:725px"></div><div class="c lw" style="left:836px">hydrate, silicate</div><div class="c " style="left:1024px">zeolite GME</div><div class="c " style="left:1156px">1</div></div>
<div class="row pink" style="top:678px"><div class="c ch" style="left:6px">Al-H-Na-O-Si</div><div class="c f f1" style="left:120px">Na<sub>2.9</sub>Al<sub>2.9</sub>Si<sub>21.1</sub>O<sub>48</sub>[H<sub>2</sub>O]<sub>2.95</sub></div><div class="c f" style="left:371px">Na<sub>2.9</sub>(Al<sub>0.12</sub>Si<sub>0.88</sub>)<sub>24</sub>O<sub>48</sub>[H<sub>2</sub>O]<sub>2.95</sub>,oS184,63</div><div class="c lw" style="left:725px">mordenite</div><div class="c lw" style="left:836px">hydrate, silicate</div><div class="c " style="left:1024px">zeolite MOR</div><div class="c " style="left:1156px">1</div></div>
<div class="row" style="top:696px"><div class="c ch" style="left:6px">Al-H-Na-O-Si</div><div class="c f f1" style="left:120px">Na<sub>12.75</sub>Al<sub>12.75</sub>Si<sub>35.25</sub>O<sub>96</sub>[H<sub>2</sub>O]<sub>2</sub></div><div class="c f" style="left:371px">Na<sub>12.75</sub>(Al<sub>0.27</sub>Si<sub>0.73</sub>)<sub>48</sub>O<sub>96</sub>[H<sub>2</sub>O]<sub>2</sub>,cF800,227</div><div class="c lw" style="left:725px"></div><div class="c lw" style="left:836px">hydrate, silicate</div><div class="c " style="left:1024px">zeolite FAU</div><div class="c " style="left:1156px">1</div></div>
<div class="row pink" style="top:714px"><div class="c ch" style="left:6px">Al-H-Na-O-Si</div><div class="c f f1" style="left:120px">Na<sub>4</sub>Al<sub>4</sub>Si<sub>12</sub>O<sub>32</sub>[H<sub>2</sub>O]<sub>14</sub></div><div class="c f" style="left:371px">Na<sub>4</sub>(Al<sub>0.25</sub>Si<sub>0.75</sub>)<sub>16</sub>O<sub>32</sub>[H<sub>2</sub>O]<sub>14</sub>,oP84,62</div><div class="c lw" style="left:725px"></div><div class="c lw" style="left:836px">hydrate, silicate</div><div class="c " style="left:1024px">zeolite GIS</div><div class="c " style="left:1156px">1</div></div>
<div class="row" style="top:732px"><div class="c ch" style="left:6px">Al-H-Na-O-Si</div><div class="c f f1" style="left:120px">Na<sub>3.93</sub>Al<sub>3.93</sub>Si<sub>8.07</sub>O<sub>24</sub>[H<sub>2</sub>O]<sub>12.3</sub></div><div class="c f" style="left:371px">Na<sub>4</sub>(Al<sub>0.33</sub>Si<sub>0.67</sub>)<sub>12</sub>O<sub>24</sub>[H<sub>2</sub>O]<sub>12.3</sub>,hR180,166</div><div class="c lw" style="left:725px"></div><div class="c lw" style="left:836px">hydrate, silicate</div><div class="c " style="left:1024px">zeolite CHA</div><div class="c " style="left:1156px">1</div></div>
<div id="vscroll"></div>
<svg class="abs" style="left:1250px;top:74px" width="30" height="680" viewBox="1250 74 30 680" shape-rendering="crispEdges">
<path d="M1263 89 L1266.5 85 L1270 89Z" fill="#222" shape-rendering="geometricPrecision"/>
<rect x="1258.5" y="280.5" width="14" height="119" rx="2" fill="url(#thumb2)" stroke="#8c8c8c"/>
<defs><linearGradient id="thumb2" x1="0" y1="0" x2="1" y2="0"><stop offset="0" stop-color="#fdfdfd"/><stop offset="0.45" stop-color="#ececec"/><stop offset="1" stop-color="#d4d4d4"/></linearGradient></defs>
<g fill="#4a4a4a"><rect x="1262" y="337" width="7" height="1"/><rect x="1262" y="340" width="7" height="1"/><rect x="1262" y="343" width="7" height="1"/></g><g fill="#fff"><rect x="1262" y="338" width="7" height="1"/><rect x="1262" y="341" width="7" height="1"/><rect x="1262" y="344" width="7" height="1"/></g>
<path d="M1263 739 L1270 739 L1266.5 743Z" fill="#222" shape-rendering="geometricPrecision"/>
</svg>
<div id="rframe"></div>
<div id="status">
  <div class="s" style="left:2px">For Help, press F1</div>
  <div class="panel" style="left:664px;width:518px"><div class="s" style="left:21px;top:0px">Licensee: Crystal Impact, Bonn, Germany</div></div>
<svg class="abs" style="left:664px;top:3px" width="20" height="17" viewBox="0 0 20 17">
<rect x="2" y="1" width="15" height="15" fill="#f2e21a"/>
<path d="M9.5 2 L16 8.5 L9.5 15 L3 8.5Z" fill="#8a8a10"/>
<g fill="#c8301a"><rect x="1" y="0" width="2" height="2"/><rect x="8" y="0" width="3" height="2"/><rect x="15" y="0" width="2" height="2"/><rect x="1" y="7" width="2" height="3"/><rect x="16" y="7" width="2" height="3"/><rect x="1" y="15" width="2" height="2"/><rect x="8" y="15" width="3" height="2"/><rect x="15" y="15" width="2" height="2"/><rect x="8" y="7" width="3" height="3"/></g>
</svg>
  <div class="panel" style="left:1184px;width:28px"></div>
  <div class="panel" style="left:1214px;width:32px"></div>
  <div class="panel" style="left:1247px;width:33px"></div>
</div>
</body></html>
